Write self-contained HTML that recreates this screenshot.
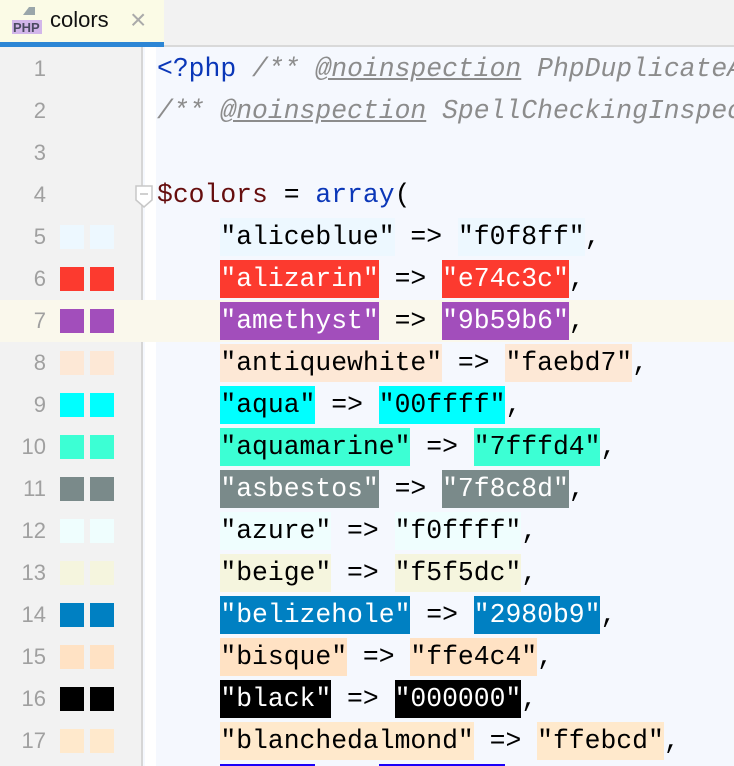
<!DOCTYPE html>
<html style="width:734px;height:766px;overflow:hidden"><head><style>
*{margin:0;padding:0;box-sizing:border-box}
body{width:734px;height:766px;overflow:hidden;background:#f5f8fe;position:relative;font-family:"Liberation Sans",sans-serif}
#tabbar{position:absolute;left:0;top:0;width:734px;height:47px;background:#f2f2f2;border-bottom:2px solid #d9d9d9}
#tab{position:absolute;left:0;top:0;width:164px;height:47px;background:#fbfbe6;border-bottom:5px solid #2d86d5}
#tab .t{position:absolute;left:50px;top:7px;font-size:22px;color:#111}
#tab .x{position:absolute;left:130px;top:4px;font-size:28px;color:#aaa}
#gut{position:absolute;left:0;top:47px;width:143px;height:719px;background:#f2f2f2;border-right:2px solid #d6d6d6}
#white{position:absolute;left:145px;top:47px;width:11px;height:719px;background:#fff}
.cur{position:absolute;left:0;top:300px;width:734px;height:42px;background:#faf8ec}
.ln{position:absolute;left:0;width:46px;text-align:right;font-size:22px;color:#a0a0a0;height:42px;line-height:42px}
.sw{position:absolute;width:24px;height:24px}
.code{position:absolute;left:157px;height:42px;line-height:42px;font-family:"Liberation Mono",monospace;font-size:26.4px;white-space:pre;color:#000}
.b{display:inline-block;height:38px;line-height:38px;vertical-align:top;margin-top:2px}
.cm{color:#8c8c8c;font-style:italic}
.u{text-decoration:underline}
</style></head><body>
<div id="tabbar"></div>
<div id="tab">
<svg style="position:absolute;left:12px;top:6px" width="30" height="30"><polygon points="17,1 23,1 23,9 11,9" fill="#9aa6aa"/><rect x="17" y="1" width="6" height="8" fill="#9aa6aa"/><rect x="0" y="14" width="30" height="14" fill="#d2b6ea"/><text x="1" y="26" font-family="Liberation Sans" font-weight="bold" font-size="13" fill="#4a4a60">PHP</text></svg>
<span class="t">colors</span><span class="x">×</span></div>
<div id="gut"></div>
<div id="white"></div>
<div class="cur"></div>
<svg style="position:absolute;left:135px;top:185px" width="18" height="24"><path d="M1 1H17V15L9 22L1 15Z" fill="#fff" stroke="#c8c8c8" stroke-width="1.5"/><path d="M5 9H13" stroke="#c0c0c0" stroke-width="1.5"/></svg>
<div id="lines"></div>
<script>
const L=[
[null,null,'<span style="color:#0b37b8">&lt;?php</span> <span class="cm">/** <span class="u">@noinspection</span> PhpDuplicateArrayKeysInspection</span>'],
[null,null,'<span class="cm">/** <span class="u">@noinspection</span> SpellCheckingInspection */</span>'],
[null,null,''],
[null,null,'<span style="color:#660e0e">$colors</span> = <span style="color:#0b37b8">array</span>('],
['aliceblue','f0f8ff','#edf8ff'],['alizarin','e74c3c','#fc3a2f'],['amethyst','9b59b6','#a24ebb'],['antiquewhite','faebd7','#fde8d6'],['aqua','00ffff','#00ffff'],['aquamarine','7fffd4','#3cffd4'],['asbestos','7f8c8d','#7a8a8a'],['azure','f0ffff','#effefe'],['beige','f5f5dc','#f5f5de'],['belizehole','2980b9','#0080c2'],['bisque','ffe4c4','#ffe2c4'],['black','000000','#000'],['blanchedalmond','ffebcd','#ffe9cc'],['blue','0000ff','#1b00f9']];
const dark={'e74c3c':1,'9b59b6':1,'7f8c8d':1,'2980b9':1,'000000':1,'0000ff':1};
let h='';
L.forEach((r,i)=>{const top=48+i*42;const n=i+1;
if(n<18)h+=`<div class="ln" style="top:${top}px">${n}</div>`;
if(r[1]===null){h+=`<div class="code" style="top:${top}px">${r[2]}</div>`;return;}
const c=r[2],fg=dark[r[1]]?'#fff':'#000';
if(n<18)h+=`<div class="sw" style="left:60px;top:${top+9}px;background:${c}"></div><div class="sw" style="left:90px;top:${top+9}px;background:${c}"></div>`;
h+=`<div class="code" style="top:${top}px">    <span class="b" style="background:${c};color:${fg}">"${r[0]}"</span> =&gt; <span class="b" style="background:${c};color:${fg}">"${r[1]}"</span>,</div>`;
});
document.getElementById('lines').innerHTML=h;
</script>
</body></html>
